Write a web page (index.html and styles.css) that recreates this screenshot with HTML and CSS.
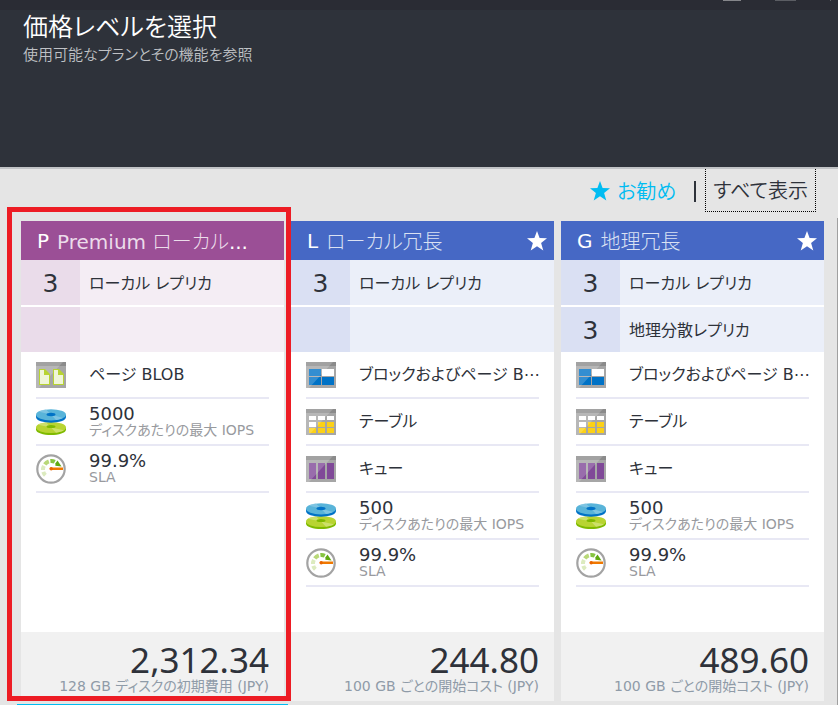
FILE: index.html
```html
<!DOCTYPE html>
<html lang="ja">
<head>
<meta charset="utf-8">
<title>価格レベルを選択</title>
<link rel="stylesheet" href="styles.css">
</head>
<body>
<svg class="defs" aria-hidden="true">
  <defs>
    <symbol id="star" viewBox="0 0 20 20"><path fill="currentColor" d="M10 0l2.6 7.1 7.4.2-5.900 4.600 2.200 7.500L10 15.200l-6.300 4.200 2.200-7.500L0 7.300l7.400-.2z"/></symbol>
    <symbol id="frame" viewBox="0 0 30 26">
      <path fill="#a6a6a6" d="M0 0h30v26H0z"/><path fill="#8b8b8b" d="M0 0h30v4H0z"/>
    </symbol>
    <symbol id="shine" viewBox="0 0 30 26"><path fill="#fff" opacity=".2" d="M0 0h27L3 26H0z"/></symbol>
    <symbol id="page-blob" viewBox="0 0 30 26">
      <use href="#frame"/><use href="#shine"/>
      <path fill="#b8d432" d="M3 7h6l5 5v11H3zM17 7h6l5 5v11H17z"/>
      <path fill="#f0f6d8" d="M4 8h4v5h5v9H4zM18 8h4v5h5v9h-9z"/>
    </symbol>
    <symbol id="block-blob" viewBox="0 0 30 26">
      <use href="#frame"/>
      <path fill="#0072c6" d="M3 7h12v7H3zM3 15h12v8H3zM16 15h12v8H16z"/>
      <use href="#shine"/><path fill="#fff" d="M16 7h12v7H16z"/>
    </symbol>
    <symbol id="table" viewBox="0 0 30 26">
      <use href="#frame"/>
      <path fill="#fff" d="M3 7h7v4H3zM12 7h7v4h-7zM21 7h7v4h-7zM3 13h7v5H3z"/>
      <path fill="#fcd116" d="M12 13h7v5h-7zM21 13h7v5h-7zM3 19h7v5H3zM12 19h7v5h-7zM21 19h7v5h-7z"/>
      <use href="#shine"/>
    </symbol>
    <symbol id="queue" viewBox="0 0 30 26">
      <use href="#frame"/><path fill="#804998" d="M3 7h7v16H3zM12 7h7v16h-7zM21 7h7v16h-7z"/><use href="#shine"/>
    </symbol>
    <symbol id="disks" viewBox="0 0 30 26">
      <path fill="#7fba00" d="M0 18.500v2c0 7.300 30 7.300 30 0v-2z"/><ellipse cx="15" cy="18.500" rx="15" ry="5.500" fill="#b8d432"/>
      <path fill="#d5e682" d="M15 18.500L2 15.700c2-1.300 5-2.100 8-2.500zM15 18.500l13 2.700c-2 1.300-5 2.100-8 2.500z" opacity=".7"/>
      <ellipse cx="15" cy="17.500" rx="4.500" ry="1.600" fill="#7fba00"/>
      <path fill="#0072c6" d="M0 6v2c0 7.500 30 7.500 30 0V6z"/><ellipse cx="15" cy="5.800" rx="15" ry="5.600" fill="#59b4d9"/>
      <path fill="#8dcbe5" d="M15 5.500L3 2.700C5 1.400 7 .8 10 .4zM15 5.500l12 3.400c-2 1.200-4 1.700-7 2.100z" opacity=".7"/>
      <ellipse cx="15" cy="5.500" rx="4.500" ry="1.700" fill="#0072c6"/>
    </symbol>
    <symbol id="gauge" viewBox="0 0 30 30">
      <circle cx="15" cy="15" r="13.700" fill="#fff" stroke="#a3a3a3" stroke-width="2.200"/>
      <g fill="none" stroke-width="4">
        <path stroke="#dcebbf" d="M9.400 21.200a8.200 8.200 0 0 1-2.100-3.400M7 16a8.200 8.200 0 0 1 .9-4.200"/>
        <path stroke="#b8d878" d="M8.800 10.400a8.200 8.200 0 0 1 4-3"/>
        <path stroke="#86c440" d="M14.400 7a8.200 8.200 0 0 1 4.400.8"/>
      </g>
      <path fill="#5fa910" d="M21.500 6.500l4 6-6.200-.8.200-2.500z"/>
      <path fill="#f07800" d="M15 13.500h12v2.600H15a1.300 1.300 0 0 1 0-2.600z"/><circle cx="15.200" cy="14.800" r="1.700" fill="#e86400"/>
    </symbol>
  </defs>
</svg>

<div class="strip" aria-hidden="true"><i class="control"></i><i class="control control-dim"></i><i class="control control-edge"></i></div>
<header class="blade-header">
  <h1>価格レベルを選択</h1>
  <p>使用可能なプランとその機能を参照</p>
</header>
<main>
  <nav class="filter">
    <button class="recommended" type="button"><svg class="star"><use href="#star"/></svg>お勧め</button>
    <span class="divider"></span>
    <button class="show-all" type="button">すべて表示</button>
  </nav>

  <div class="tiers">
    <article class="tier premium highlighted">
      <h2><b>P</b><span><span class="latin">Premium</span> ローカル<b>...</b></span></h2>
      <dl class="replicas"><div><dt>3</dt><dd>ローカル レプリカ</dd></div><div><dt></dt><dd></dd></div></dl>
      <ul class="features">
        <li><svg class="icon"><use href="#page-blob"/></svg><p>ページ BLOB</p></li>
        <li><svg class="icon"><use href="#disks"/></svg><p class="metric">5000<small>ディスクあたりの最大 IOPS</small></p></li>
        <li><svg class="icon round"><use href="#gauge"/></svg><p class="metric">99.9%<small>SLA</small></p></li>
      </ul>
      <footer><strong>2,312.34</strong><span>128 GB ディスクの初期費用 (JPY)</span></footer>
    </article>

    <article class="tier">
      <h2><b>L</b><span>ローカル冗長</span><svg class="star"><use href="#star"/></svg></h2>
      <dl class="replicas"><div><dt>3</dt><dd>ローカル レプリカ</dd></div><div><dt></dt><dd></dd></div></dl>
      <ul class="features">
        <li><svg class="icon"><use href="#block-blob"/></svg><p>ブロックおよびページ B⋯</p></li>
        <li><svg class="icon"><use href="#table"/></svg><p>テーブル</p></li>
        <li><svg class="icon"><use href="#queue"/></svg><p>キュー</p></li>
        <li><svg class="icon"><use href="#disks"/></svg><p class="metric">500<small>ディスクあたりの最大 IOPS</small></p></li>
        <li><svg class="icon round"><use href="#gauge"/></svg><p class="metric">99.9%<small>SLA</small></p></li>
      </ul>
      <footer><strong>244.80</strong><span>100 GB ごとの開始コスト (JPY)</span></footer>
    </article>

    <article class="tier">
      <h2><b>G</b><span>地理冗長</span><svg class="star"><use href="#star"/></svg></h2>
      <dl class="replicas"><div><dt>3</dt><dd>ローカル レプリカ</dd></div><div><dt>3</dt><dd>地理分散レプリカ</dd></div></dl>
      <ul class="features">
        <li><svg class="icon"><use href="#block-blob"/></svg><p>ブロックおよびページ B⋯</p></li>
        <li><svg class="icon"><use href="#table"/></svg><p>テーブル</p></li>
        <li><svg class="icon"><use href="#queue"/></svg><p>キュー</p></li>
        <li><svg class="icon"><use href="#disks"/></svg><p class="metric">500<small>ディスクあたりの最大 IOPS</small></p></li>
        <li><svg class="icon round"><use href="#gauge"/></svg><p class="metric">99.9%<small>SLA</small></p></li>
      </ul>
      <footer><strong>489.60</strong><span>100 GB ごとの開始コスト (JPY)</span></footer>
    </article>
  </div>
  <div class="tiers next-row"><div class="selected-edge"></div></div>
  <div class="scroll-edge"></div>
</main>
</body>
</html>
```
FILE: styles.css
```css
* { box-sizing: border-box; }
body, h1, h2, p, dl, dd, ul { margin: 0; padding: 0; }
body {
  background: #e5e5e5;
  color: #2e323a;
  font-family: "DejaVu Sans", "Noto Sans CJK JP", sans-serif;
  font-feature-settings: "palt";
  white-space: nowrap;
}
.defs { display: block; width: 0; height: 0; }

/* Blade header */
.strip {
  display: flex;
  justify-content: flex-end;
  gap: 34px;
  height: 10px;
  padding-right: 7px;
  background: #2a2c34;
}
.control { width: 18px; height: 1px; background: #85868a; }
.control-dim { width: 21px; background: #5b5d63; }
.control-edge { width: 1px; background: #5b5d63; }
.blade-header {
  height: 159px;
  padding: 0 23px;
  background: #2e323a;
  border-bottom: 2px solid #c1c3c6;
}
.blade-header h1 { font-size: 25px; font-weight: 350; line-height: 36px; color: #fff; }
.blade-header p { font-size: 15px; font-weight: 350; line-height: 18px; color: #bfc1c5; }

/* Filter bar */
main { position: relative; }
.filter {
  display: flex;
  justify-content: flex-end;
  align-items: flex-start;
  height: 52px;
  padding-right: 22px;
}
.filter button {
  display: flex;
  align-items: center;
  gap: 7px;
  height: 43px;
  border: 0;
  background: none;
  font: 350 20px "Noto Sans CJK JP", sans-serif;
  font-feature-settings: "palt";
  line-height: 40px;
  color: #2e323a;
}
.filter .recommended { padding: 0; color: #00bcf2; }
.star { width: 20px; height: 20px; }
.divider { width: 2px; height: 21px; margin: 12px 9px 0 18px; background: #2e323a; }
.filter .show-all { padding: 0 7px; border: 1px dotted #000; border-top: 0; }

/* Tier cards */
.tiers {
  display: grid;
  grid-template-columns: repeat(3, minmax(0, 1fr));
  gap: 7px;
  padding: 0 14px 0 21px;
}
.tier {
  position: relative;
  display: flex;
  flex-direction: column;
  min-height: 480px;
  background: #fff;
}
.tier h2 {
  display: flex;
  align-items: center;
  gap: 8px;
  height: 39px;
  padding: 0 7px 0 16px;
  background: #4668c5;
  color: #dae1f3;
  font-size: 20px;
  font-weight: 300;
}
.tier h2 b { color: #fff; font-weight: 400; }
.tier h2 .latin { font-weight: 400; }
.tier h2 .star { margin-left: auto; color: #fff; }
.replicas { display: grid; gap: 2px; }
.replicas div { display: flex; height: 45px; line-height: 48px; background: #ebeff9; }
.replicas dt { width: 59px; background: #dae0f3; text-align: center; font-size: 25px; }
.replicas dd { padding-left: 9px; font-size: 16px; }
.premium h2 { background: #9b4f96; color: #ebdcea; }
.premium .replicas div { background: #f4edf4; }
.premium .replicas dt { background: #eadcea; }

.features { flex: 1; padding: 0 15px; list-style: none; }
.features li {
  display: flex;
  align-items: center;
  gap: 23px;
  height: 47px;
  border-bottom: 2px solid #e8e8f4;
}
.icon { flex: none; width: 30px; height: 26px; }
.icon.round { height: 30px; }
.features p { font-size: 16px; line-height: 18px; }
.features .metric { font-size: 18px; }
.features small { display: block; font-size: 14px; line-height: 15px; color: #989a9e; }

.tier footer {
  height: 69px;
  padding: 10px 15px 0;
  background: #f1f1f1;
  text-align: right;
}
.tier footer strong { display: block; font: 400 35px/36px "Noto Sans", sans-serif; }
.tier footer span { display: block; font-size: 14px; line-height: 16px; color: #8f9ba8; }

.highlighted::after {
  content: "";
  position: absolute;
  inset: -14px -7px 0 -14px;
  border: 5px solid #ed1c24;
  z-index: 1;
}
.next-row { padding-top: 3px; }
.selected-edge { height: 1px; margin: 0 -4px; background: #00bcf2; }
.scroll-edge { position: absolute; top: 49px; right: 0; bottom: 0; width: 1px; background: #a0a0a0; }
```
